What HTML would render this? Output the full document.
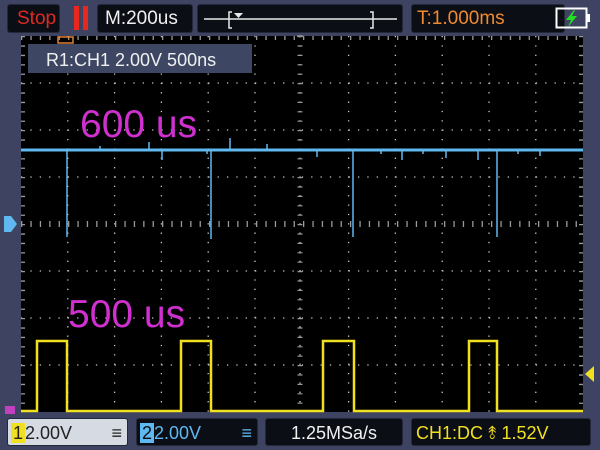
<!DOCTYPE html>
<html><head><style>
body{margin:0;width:600px;height:450px;background:#3d4360;overflow:hidden;position:relative;font-family:"Liberation Sans",sans-serif}
.b{position:absolute;background:#0c0e16;border:1px solid #23283a;border-radius:3px;box-sizing:border-box;font-size:19px;line-height:28px;white-space:nowrap}
</style></head><body>
<div class="b" style="left:7px;top:4px;width:53px;height:29px;color:#e02a20;padding-left:9px">Stop</div>
<div style="position:absolute;left:74px;top:6px;width:5px;height:24px;background:#e8281c"></div>
<div style="position:absolute;left:83px;top:6px;width:5px;height:24px;background:#e8281c"></div>
<div class="b" style="left:97px;top:4px;width:96px;height:29px;color:#f0f0f0;padding-left:7px">M:200us</div>
<div class="b" style="left:197px;top:4px;width:206px;height:29px"></div>
<svg style="position:absolute;left:197px;top:4px" width="206" height="29">
<line x1="7" y1="15" x2="200" y2="15" stroke="#e8e8e8" stroke-width="1.5"/>
<path d="M35 8h-3v16h3M173 8h3v16h-3" stroke="#e8e8e8" fill="none" stroke-width="1.5"/>
<path d="M37 9h9l-4.5 5z" fill="#e8e8e8"/>
</svg>
<div class="b" style="left:411px;top:4px;width:154px;height:29px;color:#f08a30;padding-left:5px">T:1.000ms</div>
<svg style="position:absolute;left:555px;top:7px" width="36" height="24">
<rect x="1.5" y="1.5" width="30" height="19" fill="none" stroke="#fff" stroke-width="2"/>
<rect x="32" y="7" width="3" height="8" fill="#fff"/>
<path d="M19 3l-8 10h5l-3 7 9-11h-5l3-6z" fill="#20e020"/>
</svg>
<svg style="position:absolute;left:0;top:0" width="600" height="450">
<rect x="21" y="36" width="562" height="376" fill="#000"/>
<g stroke="#c8c8c8" stroke-width="1.3" stroke-dasharray="1.3 8.06">
<line x1="67.8" y1="36" x2="67.8" y2="412"/><line x1="114.6" y1="36" x2="114.6" y2="412"/><line x1="161.4" y1="36" x2="161.4" y2="412"/><line x1="208.2" y1="36" x2="208.2" y2="412"/><line x1="255" y1="36" x2="255" y2="412"/><line x1="348.6" y1="36" x2="348.6" y2="412"/><line x1="395.4" y1="36" x2="395.4" y2="412"/><line x1="442.2" y1="36" x2="442.2" y2="412"/><line x1="489" y1="36" x2="489" y2="412"/><line x1="535.8" y1="36" x2="535.8" y2="412"/>
<line x1="21" y1="83" x2="583" y2="83"/><line x1="21" y1="130" x2="583" y2="130"/><line x1="21" y1="177" x2="583" y2="177"/><line x1="21" y1="271" x2="583" y2="271"/><line x1="21" y1="318" x2="583" y2="318"/><line x1="21" y1="365" x2="583" y2="365"/>
<line x1="300" y1="36" x2="300" y2="412"/>
</g>
<g stroke="#a0a0a0" stroke-width="1.3">
<line x1="297" y1="36" x2="303" y2="36" stroke-dasharray="0"/>
</g>
<line x1="300" y1="36" x2="300" y2="412" stroke="#9a9a9a" stroke-width="5" stroke-dasharray="1.2 8.2"/>
<line x1="21" y1="224" x2="583" y2="224" stroke="#9a9a9a" stroke-width="6" stroke-dasharray="1.3 8.1"/>
<line x1="21" y1="38" x2="583" y2="38" stroke="#9a9a9a" stroke-width="4" stroke-dasharray="1.3 8.1"/>
<line x1="581" y1="36" x2="581" y2="412" stroke="#9a9a9a" stroke-width="4" stroke-dasharray="1.3 8.1"/>
<line x1="23" y1="36" x2="23" y2="412" stroke="#9a9a9a" stroke-width="4" stroke-dasharray="1.3 8.1"/>
<rect x="28" y="44" width="224" height="29" fill="#3d4663"/>
<text x="46" y="66" font-size="18" fill="#f0f0f0" font-family="Liberation Sans">R1:CH1 2.00V 500ns</text>
<rect x="58" y="37" width="15" height="6" fill="none" stroke="#e08030" stroke-width="1.5"/>
<text x="80" y="137" font-size="39" fill="#d030d0" font-family="Liberation Sans">600 us</text>
<text x="68" y="327" font-size="39" fill="#d030d0" font-family="Liberation Sans">500 us</text>
<line x1="21" y1="150" x2="583" y2="150" stroke="#60b8f0" stroke-width="3"/>
<g stroke="#60b8f0" stroke-width="1.5">
<line x1="67" y1="150" x2="67" y2="237"/><line x1="211" y1="150" x2="211" y2="239"/><line x1="353" y1="150" x2="353" y2="237"/><line x1="497" y1="150" x2="497" y2="237"/>
<line x1="162" y1="150" x2="162" y2="160"/><line x1="230" y1="138" x2="230" y2="150"/><line x1="402" y1="150" x2="402" y2="160"/><line x1="478" y1="150" x2="478" y2="160"/><line x1="446" y1="150" x2="446" y2="158"/><line x1="149" y1="142" x2="149" y2="150"/><line x1="540" y1="150" x2="540" y2="156"/><line x1="317" y1="150" x2="317" y2="157"/>
<line x1="207" y1="150" x2="207" y2="154"/><line x1="381" y1="150" x2="381" y2="154"/><line x1="423" y1="150" x2="423" y2="154"/><line x1="518" y1="150" x2="518" y2="154"/><line x1="267" y1="144" x2="267" y2="150"/><line x1="100" y1="146" x2="100" y2="150"/>
</g>
<path d="M21 411H37V341H67V411H181V341H211V411H323V341H354V411H469V341H497V411H583" fill="none" stroke="#f0e020" stroke-width="2.5"/>
<path d="M4 216h7l6 8-6 8h-7z" fill="#60b8f0"/>
<path d="M594 366v16l-9-8z" fill="#f0e020"/>
<rect x="5" y="406" width="10" height="8" fill="#c040c0"/>
</svg>
<div class="b" style="left:7px;top:418px;width:121px;height:28px;background:#d6dae2;color:#222;padding-left:3px;font-size:18px"><span style="background:#f0e020;padding:0 2px">1</span>2.00V<span style="position:absolute;right:5px;top:0">&#8801;</span></div>
<div class="b" style="left:136px;top:418px;width:122px;height:28px;color:#60b8f0;padding-left:3px;font-size:18px"><span style="background:#60b8f0;color:#0c0e16;padding:0 2px">2</span>2.00V<span style="position:absolute;right:5px;top:0">&#8801;</span></div>
<div class="b" style="left:265px;top:418px;width:138px;height:28px;color:#f0f0f0;text-align:center;font-size:18px">1.25MSa/s</div>
<div class="b" style="left:411px;top:418px;width:180px;height:28px;color:#f0e020;padding-left:4px;font-size:18px">CH1:DC ⥉ 1.52V</div>
</body></html>
